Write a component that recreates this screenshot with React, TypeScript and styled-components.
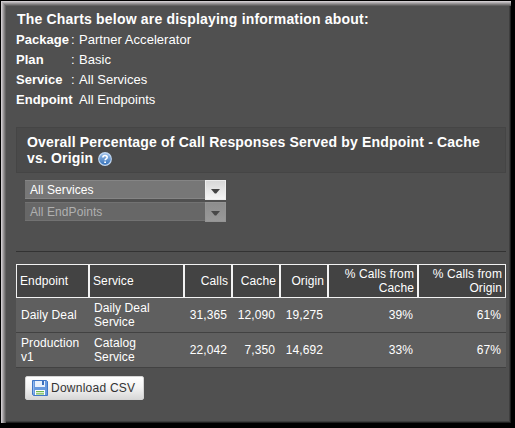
import React from "react";
import styled, { createGlobalStyle } from "styled-components";

const GlobalStyle = createGlobalStyle`
  * { box-sizing: border-box; }
  body {
    margin: 0;
    background: #000;
    font-family: "Liberation Sans", Arial, sans-serif;
    color: #fff;
  }
`;

const Frame = styled.main`
  width: 515px;
  height: 428px;
  overflow: hidden;
  background: #505050;
  border: 1px solid #000;
  border-right-width: 4px;
  border-bottom-width: 5px;
  padding: 8px 4px 0 15px;
  box-shadow: inset 1px 1px #cfcbce, inset 2px 2px #b5b1b4, inset 3px 3px #989697,
    inset 4px 4px #7d7b7c, inset 5px 5px #636262, inset -1px -1px #202020, inset -2px -2px #3e3e3e;
`;

const Title = styled.h1`
  margin: 0 0 1px 1px;
  font-size: 14px;
  line-height: 20px;
  letter-spacing: 0.19px;
  white-space: nowrap;
`;

const Details = styled.dl`
  margin: 0;
  display: grid;
  grid-template-columns: 55px 8px 1fr;
  font-size: 13px;
  line-height: 20px;
  letter-spacing: 0.04px;
  white-space: nowrap;
`;

const Term = styled.dt`
  font-weight: bold;
`;

const Value = styled.dd`
  margin: 0;
`;

const PanelHeader = styled.header`
  width: 490px;
  height: 46px;
  margin-top: 17px;
  padding: 6px 10px;
  background: #4a4a4a;
  border: 1px solid #454545;
`;

const PanelTitle = styled.h2`
  margin: 0;
  font-size: 14px;
  line-height: 16px;
  letter-spacing: 0.175px;
  white-space: nowrap;
`;

const HelpIcon = styled.svg`
  width: 14px;
  height: 14px;
  margin-left: 5px;
  vertical-align: -3px;
`;

const Filters = styled.section`
  width: 490px;
  height: 79px;
  padding: 7px 9px 0;
  display: flex;
  flex-direction: column;
  gap: 2px;
  border-bottom: 1px solid #333;
`;

const Select = styled.button<{ $muted?: boolean }>`
  display: flex;
  width: 201px;
  height: 20px;
  flex: none;
  padding: 0;
  border: 0;
  background: transparent;
  color: ${(p) => (p.$muted ? "#b0b0b0" : "#fff")};
  font: 12px "Liberation Sans", Arial, sans-serif;
  letter-spacing: 0.08px;
  text-align: left;
`;

const SelectText = styled.span<{ $muted?: boolean }>`
  flex: 1;
  height: 19px;
  padding-left: 5px;
  line-height: 18px;
  background: ${(p) => (p.$muted ? "#676767" : "#777")};
  border-top: 1px solid ${(p) => (p.$muted ? "#727272" : "#858585")};
  border-bottom: 1px solid ${(p) => (p.$muted ? "#727272" : "#858585")};
`;

const SelectArrow = styled.span<{ $muted?: boolean }>`
  display: flex;
  width: 21px;
  height: 20px;
  align-items: center;
  justify-content: center;
  padding-top: 2px;
  background: ${(p) =>
    p.$muted ? "linear-gradient(#8d8d8d, #999)" : "linear-gradient(#d8d8d8, #f5f5f5)"};
  border: 1px solid ${(p) => (p.$muted ? "#949494" : "#ededed")};
`;

const Table = styled.table`
  width: 490px;
  margin-top: 12px;
  table-layout: fixed;
  border-spacing: 0;
  font-size: 12px;
  line-height: 14px;
  letter-spacing: 0.1px;
`;

const Col = styled.col<{ $w: number }>`
  width: ${(p) => p.$w}px;
`;

const HeadCell = styled.th<{ $right?: boolean }>`
  height: 34px;
  padding: 0 3px;
  background: #434343;
  border: 1px solid #f2f2f2;
  font-weight: normal;
  text-align: ${(p) => (p.$right ? "right" : "left")};
`;

const Cell = styled.td<{ $right?: boolean }>`
  height: 35px;
  padding: 0 5px;
  background: #5f5f5f;
  border-bottom: 1px solid #424242;
  text-align: ${(p) => (p.$right ? "right" : "left")};
  white-space: pre-line;
`;

const Download = styled.button`
  display: flex;
  width: 119px;
  height: 24px;
  align-items: center;
  gap: 3px;
  margin: 8px 0 0 9px;
  padding: 0 0 0 6px;
  border: 1px solid #d5d5d5;
  border-radius: 2px;
  background: linear-gradient(#fff, #f4f4f4 45%, #d8d8d8);
  color: #333;
  font: 12px "Liberation Sans", Arial, sans-serif;
  letter-spacing: 0.25px;
  white-space: nowrap;
`;

const details = [
  ["Package", ":", "Partner Accelerator"],
  ["Plan", ":", "Basic"],
  ["Service", ":", "All Services"],
  ["Endpoint", "", "All Endpoints"],
];

const columns = [
  { label: "Endpoint", width: 73 },
  { label: "Service", width: 95 },
  { label: "Calls", width: 48, right: true },
  { label: "Cache", width: 48, right: true },
  { label: "Origin", width: 48, right: true },
  { label: "% Calls from Cache", width: 90, right: true },
  { label: "% Calls from Origin", width: 88, right: true },
];

const rows = [
  ["Daily Deal", "Daily Deal\nService", "31,365", "12,090", "19,275", "39%", "61%"],
  ["Production\nv1", "Catalog\nService", "22,042", "7,350", "14,692", "33%", "67%"],
];

function Dropdown({ label, muted }: { label: string; muted?: boolean }) {
  return (
    <Select disabled={muted} $muted={muted}>
      <SelectText $muted={muted}>{label}</SelectText>
      <SelectArrow $muted={muted}>
        <svg width="9" height="5" viewBox="0 0 9 5">
          <path d="M0 0h9L5.2 4.6H3.8z" fill={muted ? "#484848" : "#444"} />
        </svg>
      </SelectArrow>
    </Select>
  );
}

function Help() {
  return (
    <HelpIcon viewBox="0 0 14 14">
      <defs>
        <linearGradient id="help" x2="0" y2="1">
          <stop stopColor="#9dc0ea" />
          <stop offset="1" stopColor="#3470b8" />
        </linearGradient>
      </defs>
      <circle cx="7" cy="7" r="6.9" fill="#c3d9f3" />
      <circle cx="7" cy="7" r="5.8" fill="url(#help)" />
      <path d="M4.9 5.6C4.9 2.9 9.2 3 9.2 5.3c0 1.6-2.1 1.5-2.1 3" fill="none" stroke="#fff" strokeWidth="1.6" />
      <path d="M6.2 9.4H8V11H6.2z" fill="#fff" />
    </HelpIcon>
  );
}

function Disk() {
  return (
    <svg width="16" height="16" viewBox="0 0 16 16">
      <path d="M.5.5h14l1 1v14H1.5l-1-1z" fill="#6799de" stroke="#3f76c6" />
      <path d="M1.5 1.5v12" stroke="#91b9ed" />
      <path d="M3 1h10v6H3z" fill="#e8f1fc" />
      <path d="M10 1h2v4h-2z" fill="#3d70bd" />
      <path d="M3 10h10v5H3z" fill="#fff" />
      <path d="M4 11h8v1.3H4zM4 13.2h8v1.3H4z" fill="#72b84c" />
    </svg>
  );
}

export default function App() {
  return (
    <>
      <GlobalStyle />
      <Frame>
        <Title>The Charts below are displaying information about:</Title>
        <Details>
          {details.map(([term, colon, value]) => (
            <React.Fragment key={term}>
              <Term>{term}</Term>
              <span>{colon}</span>
              <Value>{value}</Value>
            </React.Fragment>
          ))}
        </Details>
        <PanelHeader>
          <PanelTitle>
            Overall Percentage of Call Responses Served by Endpoint - Cache
            <br />
            vs. Origin
            <Help />
          </PanelTitle>
        </PanelHeader>
        <Filters>
          <Dropdown label="All Services" />
          <Dropdown label="All EndPoints" muted />
        </Filters>
        <Table>
          <colgroup>
            {columns.map((c) => (
              <Col key={c.label} $w={c.width} />
            ))}
          </colgroup>
          <thead>
            <tr>
              {columns.map((c) => (
                <HeadCell key={c.label} $right={c.right}>
                  {c.label}
                </HeadCell>
              ))}
            </tr>
          </thead>
          <tbody>
            {rows.map((row) => (
              <tr key={row[0]}>
                {row.map((text, i) => (
                  <Cell key={i} $right={i > 1}>
                    {text}
                  </Cell>
                ))}
              </tr>
            ))}
          </tbody>
        </Table>
        <Download>
          <Disk />
          Download CSV
        </Download>
      </Frame>
    </>
  );
}
